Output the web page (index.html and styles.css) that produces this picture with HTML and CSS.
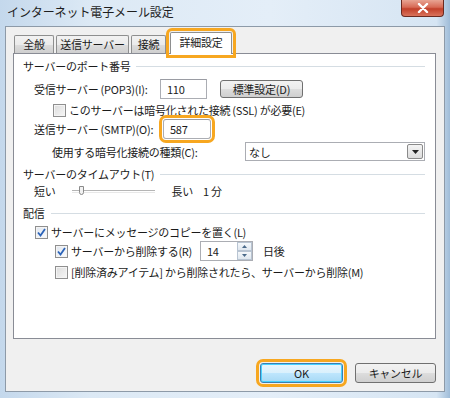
FILE: index.html
```html
<!doctype html>
<html>
	<head>
		<title>インターネット電子メール設定</title>
		<link rel="stylesheet" href="styles.css">
	</head>
	<body>
		<div id="window">
			<div id="titlebar">
				<span id="title">インターネット電子メール設定</span>
				<div id="close">
					<svg width="12" height="10" viewBox="0 0 12 10"><path d="M2 1 L10 9 M10 1 L2 9" stroke="#fff" stroke-width="2.4" stroke-linecap="round"/></svg>
				</div>
			</div>

			<div id="client">
				<div id="tabs">
					<div class="tab tab-general">全般</div>
					<div class="tab tab-outgoing">送信サーバー</div>
					<div class="tab tab-connect">接続</div>
					<div class="tab active highlight">詳細設定</div>
				</div>

				<div id="panel">
					<div class="group-title">サーバーのポート番号</div>

					<div class="row row-pop">
						<span class="label label-pop">受信サーバー (POP3)(I):</span>
						<span class="input input-pop">110</span>
						<span class="button button-default">標準設定(D)</span>
					</div>

					<div class="row row-ssl">
						<span class="checkbox"></span>
						<span>このサーバーは暗号化された接続 (SSL) が必要(E)</span>
					</div>

					<div class="row row-smtp">
						<span class="label label-smtp">送信サーバー (SMTP)(O):</span>
						<span class="input input-smtp highlight">587</span>
					</div>

					<div class="row row-enc">
						<span class="label label-enc">使用する暗号化接続の種類(C):</span>
						<span class="select">
							<span class="select-value">なし</span>
							<span class="select-arrow">
								<svg width="7" height="4" viewBox="0 0 7 4"><path d="M0 0 H7 L3.5 4 Z" fill="#222"/></svg>
							</span>
						</span>
					</div>

					<div class="group-title group-timeout">サーバーのタイムアウト(T)</div>

					<div class="row row-slider">
						<span class="slider-short">短い</span>
						<span class="slider">
							<span class="slider-track"></span>
							<span class="slider-thumb"></span>
						</span>
						<span class="slider-long">長い</span>
						<span class="slider-value">1 分</span>
					</div>

					<div class="group-title group-delivery">配信</div>

					<div class="row row-copy">
						<span class="checkbox checked">
							<svg width="9" height="9" viewBox="0 0 9 9"><path d="M1 4.5 L3.5 7.5 L8 1" stroke="#2b63b8" stroke-width="1.8" fill="none"/></svg>
						</span>
						<span>サーバーにメッセージのコピーを置く(L)</span>
					</div>

					<div class="row row-delete">
						<span class="checkbox checked">
							<svg width="9" height="9" viewBox="0 0 9 9"><path d="M1 4.5 L3.5 7.5 L8 1" stroke="#2b63b8" stroke-width="1.8" fill="none"/></svg>
						</span>
						<span class="label-delete">サーバーから削除する(R)</span>
						<span class="spin">
							<span class="spin-value">14</span>
							<span class="spin-buttons">
								<span class="spin-btn"><svg width="5" height="3" viewBox="0 0 5 3"><path d="M0 3 H5 L2.5 0 Z" fill="#4a6a8a"/></svg></span>
								<span class="spin-btn"><svg width="5" height="3" viewBox="0 0 5 3"><path d="M0 0 H5 L2.5 3 Z" fill="#4a6a8a"/></svg></span>
							</span>
						</span>
						<span class="days">日後</span>
					</div>

					<div class="row row-trash">
						<span class="checkbox"></span>
						<span>[削除済みアイテム] から削除されたら、サーバーから削除(M)</span>
					</div>
				</div>

				<div id="footer">
					<span class="button button-ok highlight">OK</span>
					<span class="button button-cancel">キャンセル</span>
				</div>
			</div>
		</div>
	</body>
</html>
```

FILE: styles.css
```css
html, body {
	margin: 0;
	width: 450px;
	height: 398px;
	overflow: hidden;
}

body {
	font-family: "Noto Sans CJK JP", "Noto Sans", sans-serif;
	font-size: 11px;
	letter-spacing: -0.25px;
	color: #1b1b1b;
	background: linear-gradient(to right, #c4d8ec 0%, #dce9f5 20%, #e4eef8 60%, #d6e5f3 97%, #9fbcd8 100%);
}

#window {
	padding: 0 5px 6px 5px;
}

#titlebar {
	height: 26px;
	display: flex;
	justify-content: space-between;
	align-items: flex-start;
}

#title {
	font-size: 12px;
	letter-spacing: -0.1px;
	line-height: 17px;
	margin: 3px 0 0 2px;
	color: #1e1e1e;
}

#close {
	width: 43px;
	height: 17px;
	margin-right: 1px;
	box-sizing: border-box;
	border: 1px solid #6b2a20;
	border-top: none;
	border-radius: 0 0 4px 4px;
	background: linear-gradient(to bottom, #e8a493 0%, #d76a55 45%, #c2402a 55%, #d9735c 100%);
	display: flex;
	align-items: center;
	justify-content: center;
}

#client {
	height: 366px;
	box-sizing: border-box;
	background: #f0f0f0;
	border: 1px solid #8d9aa8;
	padding: 6px 8px 0 7px;
}

/* TABS */
#tabs {
	display: flex;
	align-items: flex-end;
	height: 20px;
	padding-left: 1px;
}

.tab {
	height: 18px;
	box-sizing: border-box;
	margin-right: 2px;
	line-height: 16px;
	text-align: center;
	border: 1px solid #8e8f8f;
	border-bottom: none;
	border-radius: 2px 2px 0 0;
	background: linear-gradient(to bottom, #f2f2f2 0%, #ebebeb 50%, #dddddd 51%, #cfcfcf 100%);
}

.tab-general {
	width: 40px;
}

.tab-outgoing {
	width: 73px;
}

.tab-connect {
	width: 35px;
}

.tab.active {
	width: 62px;
	height: 22px;
	margin-left: 2px;
	margin-bottom: -1px;
	line-height: 19px;
	background: #ffffff;
	position: relative;
	z-index: 1;
}

.highlight {
	outline: 3px solid #f7a720;
	outline-offset: 1px;
	border-radius: 3px;
}

.tab.highlight {
	border-radius: 2px 2px 0 0;
}

#panel {
	height: 286px;
	box-sizing: border-box;
	background: #ffffff;
	border: 1px solid #898c95;
	padding: 4px 10px 0 9px;
}

.group-title {
	display: flex;
	align-items: center;
	height: 16px;
	line-height: 16px;
	white-space: nowrap;
}

.group-title:after {
	content: '';
	flex: 1;
	border-top: 1px solid #d5dde3;
	margin-left: 6px;
}

.group-timeout {
	margin-top: 5px;
}

.group-delivery {
	margin-top: 6px;
}

.row {
	display: flex;
	align-items: center;
	white-space: nowrap;
	padding-left: 11px;
}

.row > * {
	flex-shrink: 0;
}

.label-pop {
	width: 126px;
}

.label-smtp {
	width: 129px;
}

.label-enc {
	width: 193px;
	padding-left: 18px;
}

.row-pop {
	margin-top: 5px;
	height: 20px;
}

.row-ssl {
	margin-top: 2px;
	height: 18px;
	padding-left: 30px;
}

.row-smtp {
	height: 20px;
}

.row-enc {
	margin-top: 3px;
	height: 19px;
}

.input {
	height: 20px;
	box-sizing: border-box;
	border: 1px solid #abadb3;
	border-top-color: #9a9ca3;
	background: #fff;
	line-height: 18px;
	padding-left: 6px;
}

.input-pop {
	width: 47px;
}

.input-smtp {
	width: 48px;
}

.button {
	display: inline-flex;
	align-items: center;
	justify-content: center;
	height: 18px;
	box-sizing: border-box;
	border: 1px solid #707070;
	border-radius: 3px;
	background: linear-gradient(to bottom, #f2f2f2 0%, #ebebeb 50%, #dddddd 51%, #cfcfcf 100%);
}

.button-default {
	width: 83px;
	margin-left: 13px;
}

.checkbox {
	width: 13px;
	height: 13px;
	box-sizing: border-box;
	border: 1px solid #8f8f8f;
	background: linear-gradient(135deg, #dcdcdc 0%, #f6f6f6 100%);
	box-shadow: inset 0 0 0 1px #f4f4f4;
	margin-right: 3px;
	display: inline-flex;
	align-items: center;
	justify-content: center;
}

.checkbox.checked {
	background: linear-gradient(135deg, #e0e6ee 0%, #fafbfd 100%);
}

.select {
	width: 180px;
	height: 19px;
	box-sizing: border-box;
	border: 1px solid #abadb3;
	background: #fff;
	display: flex;
	align-items: center;
	justify-content: space-between;
}

.select-value {
	padding-left: 3px;
}

.select-arrow {
	width: 16px;
	height: 15px;
	margin-right: 1px;
	box-sizing: border-box;
	border: 1px solid #8a8a8a;
	border-radius: 2px;
	background: linear-gradient(to bottom, #f4f4f4 0%, #dcdcdc 100%);
	display: flex;
	align-items: center;
	justify-content: center;
}

/* SLIDER */
.row-slider {
	margin-top: 1px;
	height: 16px;
}

.slider {
	position: relative;
	width: 83px;
	height: 16px;
	margin-left: 16px;
}

.slider-track {
	position: absolute;
	left: 0;
	right: 0;
	top: 7px;
	height: 1px;
	border-top: 1px solid #b5b5b5;
	border-bottom: 1px solid #e8e8e8;
}

.slider-thumb {
	position: absolute;
	left: 7px;
	top: 3px;
	width: 5px;
	height: 9px;
	box-sizing: border-box;
	border: 1px solid #8a8a8a;
	border-radius: 0 0 3px 3px;
	background: #f2f2f2;
}

.slider-long {
	margin-left: 17px;
}

.slider-value {
	margin-left: 10px;
}

/* DELIVERY */
.row-copy {
	margin-top: 2px;
	height: 18px;
	padding-left: 12px;
}

.row-delete {
	height: 20px;
	padding-left: 32px;
}

.label-delete {
	width: 129px;
}

.row-trash {
	margin-top: 2px;
	height: 18px;
	padding-left: 32px;
}

.spin {
	width: 53px;
	height: 20px;
	box-sizing: border-box;
	border: 1px solid #abadb3;
	background: #fff;
	display: flex;
	justify-content: space-between;
}

.spin-value {
	padding-left: 6px;
	line-height: 18px;
}

.spin-buttons {
	display: flex;
	flex-direction: column;
	width: 15px;
}

.spin-btn {
	flex: 1;
	box-sizing: border-box;
	border: 1px solid #b8c4d2;
	background: linear-gradient(to bottom, #f5f8fb 0%, #dfe7ef 100%);
	display: flex;
	align-items: center;
	justify-content: center;
}

.days {
	margin-left: 10px;
}

/* FOOTER */
#footer {
	display: flex;
	justify-content: flex-end;
	gap: 12px;
	margin-top: 24px;
}

.button-ok {
	width: 83px;
	height: 20px;
	border-color: #3c7fb1;
	box-shadow: inset 0 0 0 1px #48d1ff;
	background: linear-gradient(to bottom, #eaf6fd 0%, #d9f0fc 50%, #bee6fd 51%, #a7d9f5 100%);
}

.button-cancel {
	width: 81px;
	height: 20px;
}
```
